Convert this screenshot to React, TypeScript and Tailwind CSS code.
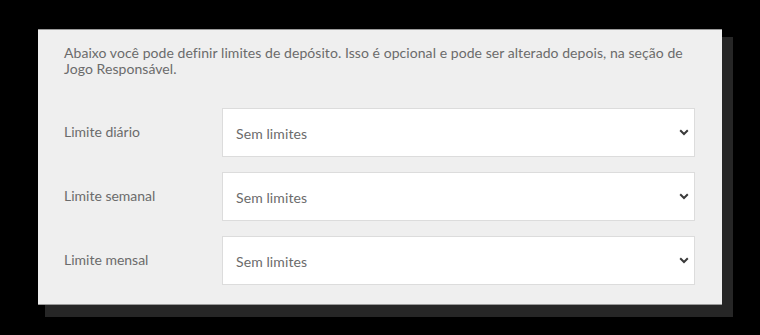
import React from "react";

const rows = ["Limite diário", "Limite semanal", "Limite mensal"];

function Chevron() {
  return (
    <svg width="10" height="7" viewBox="0 0 10 7" className="shrink-0">
      <path d="M1.2 1.3 L5 5 L8.8 1.3" fill="none" stroke="#3a3a3a" strokeWidth="2" strokeLinecap="butt" />
    </svg>
  );
}

export default function App() {
  return (
    <div className="w-[760px] h-[335px] bg-black pl-[38px] pt-[29px] overflow-hidden" style={{ fontFamily: "Lato, 'Open Sans', sans-serif" }}>
      <div className="w-[684px] h-[276px] bg-[#efefef] border-t border-b border-[#9a9a9a] shadow-[9px_10px_0_2px_#262626] pl-[26px] pr-[27px] pt-[15px]">
        <p className="text-[14px] leading-[16px] text-[#6b6b6b] tracking-[0.06px]">
          Abaixo você pode definir limites de depósito. Isso é opcional e pode ser alterado depois, na seção de Jogo Responsável.
        </p>
        <div className="mt-[31px] flex flex-col gap-[15px]">
          {rows.map((r) => (
            <div key={r} className="flex items-center">
              <div className="w-[158px] text-[14px] text-[#6b6b6b] pb-[2px]">{r}</div>
              <div className="flex-1 h-[49px] bg-white border border-[#dcdcdc] flex items-center justify-between pl-[13px] pr-[5px]">
                <span className="text-[14px] text-[#6b6b6b] pt-[1px] tracking-[0.1px]">Sem limites</span>
                <Chevron />
              </div>
            </div>
          ))}
        </div>
      </div>
    </div>
  );
}
